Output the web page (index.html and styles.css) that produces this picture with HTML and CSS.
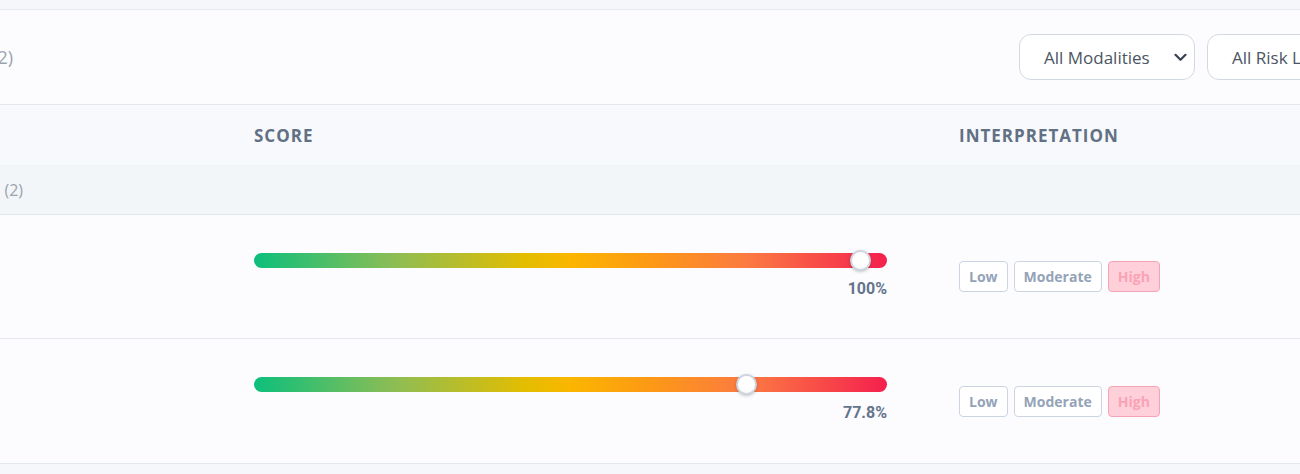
FILE: index.html
```html
<!DOCTYPE html>
<html lang="en">
  <head>
    <meta charset="UTF-8" />
    <meta name="viewport" content="width=device-width, initial-scale=1.0" />
    <title>Risk Scores</title>
    <link rel="stylesheet" href="styles.css">
  </head>
  <body>
    <div class="card">
      <div class="toolbar">
        <div class="lead title"><span>Risk Scores (2)</span></div>
        <div class="filters">
          <div class="select wide">
            <span>All Modalities</span>
            <svg width="13" height="9" viewBox="0 0 13 9"><path d="M1.5 1.8 L6.5 6.8 L11.5 1.8" fill="none" stroke="#374151" stroke-width="2.2" stroke-linecap="round" stroke-linejoin="round"/></svg>
          </div>
          <div class="select">
            <span>All Risk Levels</span>
            <svg width="13" height="9" viewBox="0 0 13 9"><path d="M1.5 1.8 L6.5 6.8 L11.5 1.8" fill="none" stroke="#374151" stroke-width="2.2" stroke-linecap="round" stroke-linejoin="round"/></svg>
          </div>
        </div>
      </div>

      <div class="row head">
        <div class="cell"></div>
        <div class="cell">Score</div>
        <div class="cell">Interpretation</div>
      </div>

      <div class="group">
        <div class="lead"><span><b>High Risk</b><span class="count">(2)</span></span></div>
      </div>

      <div class="row item">
        <div class="cell"></div>
        <div class="cell score">
          <div class="bar">
            <span class="thumb" style="left: 606px"></span>
          </div>
          <div class="pct">100%</div>
        </div>
        <div class="cell badges">
          <span class="badge">Low</span>
          <span class="badge">Moderate</span>
          <span class="badge on">High</span>
        </div>
      </div>

      <div class="row item">
        <div class="cell"></div>
        <div class="cell score">
          <div class="bar">
            <span class="thumb" style="left: 77.8%"></span>
          </div>
          <div class="pct">77.8%</div>
        </div>
        <div class="cell badges">
          <span class="badge">Low</span>
          <span class="badge">Moderate</span>
          <span class="badge on">High</span>
        </div>
      </div>
    </div>
  </body>
</html>
```

FILE: styles.css
```css
* {
  box-sizing: border-box;
}

body {
  margin: 0;
  padding-top: 9px;
  overflow: hidden;
  background-color: #f5f7fa;
  font-family: "Open Sans", Arial, sans-serif;
}

.card {
  width: 1400px;
  background-color: #fcfcfe;
  border-top: 1px solid #e5e9ef;
  border-bottom: 1px solid #e2e7ee;
}

/* text that runs off the left edge */
.lead {
  display: flex;
  justify-content: flex-end;
  white-space: nowrap;
}

.toolbar {
  display: flex;
  align-items: center;
  height: 95px;
  padding-right: 24px;
  border-bottom: 1px solid #e2e7ee;
}

.title {
  width: 13px;
  font-size: 18px;
  color: #9ca3af;
}

.filters {
  display: flex;
  gap: 12px;
  margin-left: auto;
}

.select {
  display: flex;
  align-items: center;
  justify-content: space-between;
  height: 46px;
  width: 169px;
  padding: 0 7px 0 24px;
  border: 1px solid #d3d9e1;
  border-radius: 12px;
  background: #fff;
  font-size: 17px;
  color: #4b5563;
}

.select.wide {
  width: 176px;
}

.row {
  display: grid;
  grid-template-columns: 254px 705px 1fr;
}

.head {
  height: 61px;
  align-items: center;
  background-color: #f7f9fc;
  border-bottom: 1px solid #eef2f6;
  font-size: 17px;
  font-weight: 700;
  letter-spacing: 1px;
  text-transform: uppercase;
  color: #627084;
}

.group {
  height: 49px;
  display: flex;
  align-items: center;
  background-color: #f3f6f9;
  border-bottom: 1px solid #e2e7ee;
}

.group .lead {
  width: 23px;
  font-size: 16px;
  color: #9ca3af;
}

.group b {
  color: #374151;
}

.count {
  margin-left: 8px;
}

.item {
  height: 124px;
  align-items: center;
  border-bottom: 1px solid #e2e7ee;
}

.item:last-child {
  border-bottom: none;
}

.score {
  align-self: start;
  padding-top: 38px;
  width: 633px;
}

.bar {
  position: relative;
  height: 15px;
  border-radius: 8px;
  background: linear-gradient(90deg, #0cbf7c 0%, #8cbd55 22%, #e4bd00 43%, #fbb600 50%, #fd9a14 62%, #fc7a42 78%, #f4204e 100%);
}

.thumb {
  position: absolute;
  top: 50%;
  width: 21px;
  height: 21px;
  margin: -10.5px 0 0 -10.5px;
  border-radius: 50%;
  background: #fff;
  border: 2px solid #cfd6df;
  box-shadow: 0 1px 3px rgba(15, 23, 42, 0.25);
}

.pct {
  margin-top: 11px;
  text-align: right;
  font-family: Roboto, Arial, sans-serif;
  font-size: 16px;
  line-height: 19px;
  font-weight: 700;
  color: #64748b;
}

.badges {
  display: flex;
  gap: 6px;
}

.badge {
  padding: 5px 9px;
  border: 1px solid #cbd5e1;
  border-radius: 4px;
  background: #fff;
  font-size: 14px;
  font-weight: 700;
  line-height: 19px;
  color: #94a3b8;
}

.badge.on {
  background: #ffd0da;
  border-color: #f5a4b5;
  color: #f9a3b5;
}
```
